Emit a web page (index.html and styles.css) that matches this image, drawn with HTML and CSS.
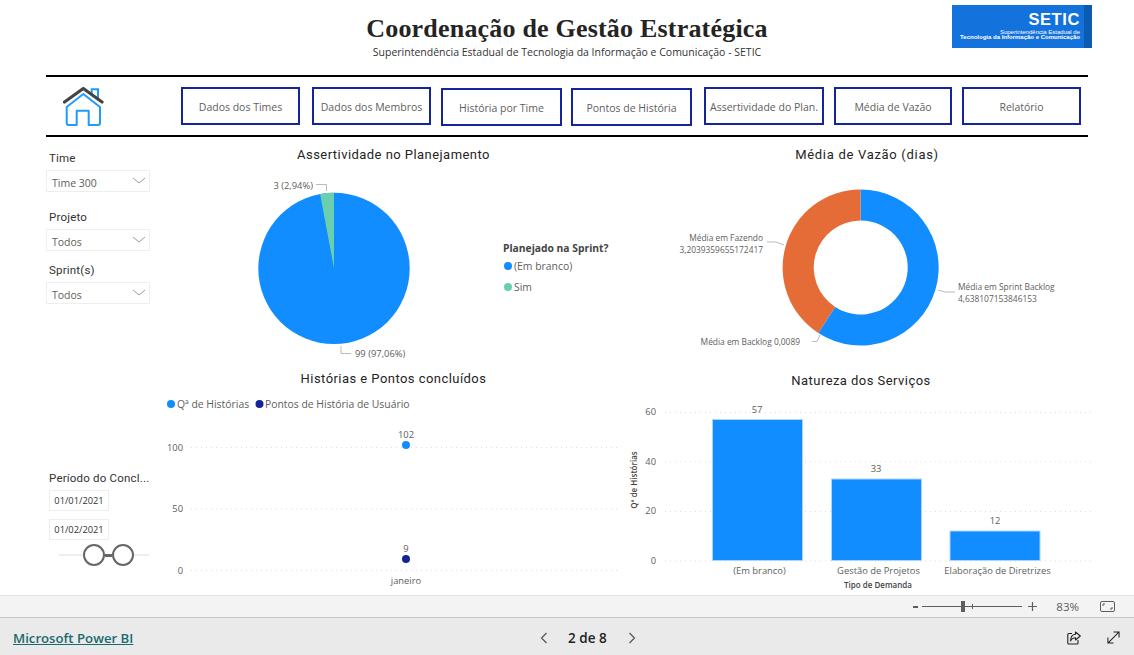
FILE: index.html
```html
<!DOCTYPE html>
<html lang="pt-BR">
<head>
    <meta charset="UTF-8">
    <title>Coordenação de Gestão Estratégica</title>
    <link rel="stylesheet" href="styles.css">
</head>
<body>
    <div class="report">
        <!-- cabeçalho -->
        <header class="report-header">
            <div></div>
            <div class="report-title">
                <h1>Coordenação de Gestão Estratégica</h1>
                <p>Superintendência Estadual de Tecnologia da Informação e Comunicação - SETIC</p>
            </div>
            <div class="logo">
                <div class="logo-main">
                    <strong>SETIC</strong>
                    <span>Superintendência Estadual de</span>
                    <span class="logo-bold">Tecnologia da Informação e Comunicação</span>
                </div>
                <div class="logo-bar"></div>
            </div>
        </header>

        <!-- menu -->
        <nav class="nav">
            <svg class="home-icon" width="42" height="40" viewBox="63 87 42 40" fill="none">
                <path d="M91.7 94V89.2H98V100" stroke="#1e9bff" stroke-width="2"/>
                <path d="M66.7 107L83.3 94L100 107V123Q100 125 98 125H88.7V110.7H76.7V125H68.7Q66.7 125 66.7 123Z" stroke="#1e9bff" stroke-width="2" stroke-linejoin="round"/>
                <path d="M64.5 102L83.3 88.5L102 102" stroke="#444" stroke-width="3.2" stroke-linecap="round" stroke-linejoin="round"/>
            </svg>
            <a class="nav-btn">Dados dos Times</a>
            <a class="nav-btn">Dados dos Membros</a>
            <a class="nav-btn nav-btn-low">História por Time</a>
            <a class="nav-btn nav-btn-low">Pontos de História</a>
            <a class="nav-btn">Assertividade do Plan.</a>
            <a class="nav-btn">Média de Vazão</a>
            <a class="nav-btn">Relatório</a>
        </nav>

        <div class="dash">
            <!-- filtros -->
            <aside class="filters">
                <div class="slicer slicer-time">
                    <label>Time</label>
                    <div class="dropdown">Time 300
                        <svg width="14" height="7" viewBox="0 0 14 7" fill="none"><path d="M1 1L7 6L13 1" stroke="#9a9a9a"/></svg>
                    </div>
                </div>
                <div class="slicer slicer-projeto">
                    <label>Projeto</label>
                    <div class="dropdown">Todos
                        <svg width="14" height="7" viewBox="0 0 14 7" fill="none"><path d="M1 1L7 6L13 1" stroke="#9a9a9a"/></svg>
                    </div>
                </div>
                <div class="slicer slicer-sprint">
                    <label>Sprint(s)</label>
                    <div class="dropdown">Todos
                        <svg width="14" height="7" viewBox="0 0 14 7" fill="none"><path d="M1 1L7 6L13 1" stroke="#9a9a9a"/></svg>
                    </div>
                </div>
                <div class="slicer slicer-periodo">
                    <label>Período do Concl...</label>
                    <div class="date-box">01/01/2021</div>
                    <div class="date-box">01/02/2021</div>
                    <div class="range">
                        <span class="range-track range-left"></span>
                        <span class="range-handle"></span>
                        <span class="range-link"></span>
                        <span class="range-handle"></span>
                        <span class="range-track range-right"></span>
                    </div>
                </div>
            </aside>

            <main class="charts">
                <!-- pizza -->
                <section class="visual visual-top">
                    <h2 class="title-offset">Assertividade no Planejamento</h2>
                    <svg width="467" height="201" viewBox="160 165 467 201">
                        <circle cx="334" cy="268.4" r="75.7" fill="#118dff"/>
                        <path d="M334 268.4V192.7A75.7 75.7 0 0 0 320.1 194Z" fill="#6acfae"/>
                        <path d="M316 184.5H326.5V191" class="leader"/>
                        <text x="313" y="188.5" text-anchor="end" class="lbl">3 (2,94%)</text>
                        <path d="M341 346V353.5H351" class="leader"/>
                        <text x="355" y="357" class="lbl">99 (97,06%)</text>
                        <text x="503" y="252" class="legend-title">Planejado na Sprint?</text>
                        <circle cx="508" cy="266" r="4" fill="#118dff"/>
                        <text x="514" y="270" class="lbl-lg">(Em branco)</text>
                        <circle cx="508" cy="287" r="4" fill="#6acfae"/>
                        <text x="514" y="291" class="lbl-lg">Sim</text>
                    </svg>
                </section>

                <!-- rosca -->
                <section class="visual visual-top visual-donut">
                    <h2>Média de Vazão (dias)</h2>
                    <svg width="480" height="201" viewBox="627 165 480 201">
                        <path d="M860.5 189.5A78 78 0 1 1 818.3 333L835.1 306.9A47 47 0 1 0 860.5 220.5Z" fill="#118dff"/>
                        <path d="M860.5 189.5A78 78 0 0 0 818.3 333L835.1 306.9A47 47 0 0 1 860.5 220.5Z" fill="#e66c37"/>
                        <path d="M767 242H776L784 245" class="leader"/>
                        <path d="M938 290L945 292H955" class="leader"/>
                        <path d="M812 341.5H817L820 335" class="leader"/>
                        <text x="763" y="241" text-anchor="end" class="lbl-sm">Média em Fazendo</text>
                        <text x="763" y="253" text-anchor="end" class="lbl-sm">3,2039359655172417</text>
                        <text x="958" y="290" class="lbl-sm">Média em Sprint Backlog</text>
                        <text x="958" y="302" class="lbl-sm">4,638107153846153</text>
                        <text x="800" y="345" text-anchor="end" class="lbl-sm">Média em Backlog 0,0089</text>
                    </svg>
                </section>

                <!-- pontos -->
                <section class="visual visual-low">
                    <h2 class="title-offset">Histórias e Pontos concluídos</h2>
                    <svg width="467" height="206" viewBox="160 389 467 206">
                        <circle cx="171" cy="404" r="4" fill="#118dff"/>
                        <text x="177" y="408" class="lbl-lg">Qª de Histórias</text>
                        <circle cx="259.5" cy="404" r="4" fill="#12239e"/>
                        <text x="265" y="408" class="lbl-lg">Pontos de História de Usuário</text>
                        <path d="M191 447.5H620M191 509H620M191 570.5H620" class="grid-line"/>
                        <text x="183" y="450.5" text-anchor="end" class="lbl">100</text>
                        <text x="183" y="512" text-anchor="end" class="lbl">50</text>
                        <text x="183" y="573.5" text-anchor="end" class="lbl">0</text>
                        <text x="406" y="438" text-anchor="middle" class="lbl">102</text>
                        <circle cx="406" cy="445" r="4" fill="#118dff"/>
                        <text x="406" y="552" text-anchor="middle" class="lbl">9</text>
                        <circle cx="406" cy="559" r="4" fill="#12239e"/>
                        <text x="406" y="584" text-anchor="middle" class="lbl">janeiro</text>
                    </svg>
                </section>

                <!-- colunas -->
                <section class="visual visual-low visual-bars">
                    <h2 class="title-bars">Natureza dos Serviços</h2>
                    <svg width="480" height="204" viewBox="627 391 480 204">
                        <path d="M665 412.5H1092M665 462H1092M665 511.5H1092M665 561H1092" class="grid-line"/>
                        <text x="656" y="415" text-anchor="end" class="lbl">60</text>
                        <text x="656" y="464.5" text-anchor="end" class="lbl">40</text>
                        <text x="656" y="514" text-anchor="end" class="lbl">20</text>
                        <text x="656" y="563.5" text-anchor="end" class="lbl">0</text>
                        <text transform="translate(637 480) rotate(-90)" text-anchor="middle" class="axis-title">Qª de Histórias</text>
                        <rect x="712.5" y="419.5" width="90" height="141" class="bar"/>
                        <rect x="831.5" y="479" width="90" height="81.5" class="bar"/>
                        <rect x="950" y="531" width="90" height="29.5" class="bar"/>
                        <text x="757" y="413" text-anchor="middle" class="lbl">57</text>
                        <text x="876" y="471.5" text-anchor="middle" class="lbl">33</text>
                        <text x="995" y="523.5" text-anchor="middle" class="lbl">12</text>
                        <text x="759.5" y="574" text-anchor="middle" class="lbl">(Em branco)</text>
                        <text x="878.5" y="574" text-anchor="middle" class="lbl">Gestão de Projetos</text>
                        <text x="997.5" y="574" text-anchor="middle" class="lbl">Elaboração de Diretrizes</text>
                        <text x="878" y="588" text-anchor="middle" class="axis-title">Tipo de Demanda</text>
                    </svg>
                </section>
            </main>
        </div>
    </div>

    <!-- barra de zoom -->
    <div class="zoom-bar">
        <span class="zoom-minus"></span>
        <div class="zoom-slider"><span class="zoom-thumb"></span><span class="zoom-tick"></span></div>
        <svg class="zoom-plus" width="9" height="9" viewBox="0 0 9 9"><path d="M0 4.5H9M4.5 0V9" stroke="#605e5c" stroke-width="1.2"/></svg>
        <span class="zoom-value">83%</span>
        <svg class="zoom-fit" width="15" height="11" viewBox="0 0 15 11" fill="none">
            <rect x="0.5" y="0.5" width="14" height="10" rx="1.5" stroke="#605e5c"/>
            <path d="M3 5V3H5M12 6V8H10" stroke="#605e5c"/>
        </svg>
    </div>

    <!-- rodapé -->
    <footer class="footer">
        <a class="pbi-link">Microsoft Power BI</a>
        <div class="pager">
            <svg width="8" height="12" viewBox="0 0 8 12" fill="none"><path d="M6.5 1L1.5 6L6.5 11" stroke="#555" stroke-width="1.2"/></svg>
            <span>2 de 8</span>
            <svg width="8" height="12" viewBox="0 0 8 12" fill="none"><path d="M1.5 1L6.5 6L1.5 11" stroke="#555" stroke-width="1.2"/></svg>
        </div>
        <div class="footer-icons">
            <svg width="14" height="14" viewBox="0 0 14 14" fill="none">
                <path d="M5 2.5H1.8Q0.8 2.5 0.8 3.5V12Q0.8 13 1.8 13H10Q11 13 11 12V9" stroke="#222" stroke-width="1.1"/>
                <path d="M8.5 1L13.3 5L8.5 9V6.8C6 6.8 4.6 7.8 3.6 10C3.6 6.5 5.4 3.6 8.5 3.3Z" stroke="#222" stroke-width="1.1" stroke-linejoin="round"/>
            </svg>
            <svg width="13" height="13" viewBox="0 0 14 14" fill="none">
                <path d="M1 13L13 1M7 1H13V7M1 7V13H7" stroke="#222" stroke-width="1.1"/>
            </svg>
        </div>
    </footer>
</body>
</html>
```

FILE: styles.css
```css
/* página */
html, body {
    height: 100%;
}

body {
    display: flex;
    flex-direction: column;
    margin: 0;
    background-color: #fff;
    color: #605e5c;
    font-family: "Open Sans", "Liberation Sans", sans-serif;
    overflow: hidden;
}

.report {
    flex: 1;
    min-height: 0;
    overflow: hidden;
}

/* cabeçalho */
.report-header {
    display: grid;
    grid-template-columns: 1fr auto 1fr;
    height: 75px;
    padding-right: 42px;
    box-sizing: border-box;
}

.report-title {
    text-align: center;
    padding-left: 42px;
}

.report-title h1 {
    margin: 14px 0 0;
    font-family: "Liberation Serif", serif;
    font-size: 26px;
    line-height: 30px;
    font-weight: bold;
    letter-spacing: 0.2px;
    color: #252423;
}

.report-title p {
    margin: 0;
    font-size: 10.5px;
    line-height: 16px;
    color: #333;
}

.logo {
    justify-self: end;
    display: flex;
    width: 140px;
    height: 43px;
    margin-top: 5px;
}

.logo-main {
    flex: 1;
    display: flex;
    flex-direction: column;
    align-items: flex-end;
    padding: 6px 4px 0 0;
    background-color: #1472dc;
    color: #fff;
    font-family: "Liberation Sans", sans-serif;
    font-size: 6px;
    line-height: 5px;
}

.logo-main strong {
    font-size: 16.5px;
    line-height: 16px;
    letter-spacing: 0.6px;
    margin-bottom: 3px;
}

.logo-bold {
    font-weight: bold;
    white-space: nowrap;
}

.logo-bar {
    width: 8px;
    background-color: #0b5cb0;
}

/* menu */
.nav {
    display: flex;
    align-items: flex-start;
    gap: 10px;
    width: 1042px;
    height: 62px;
    margin-left: 46px;
    box-sizing: border-box;
    border-top: 2.5px solid #000;
    border-bottom: 2.5px solid #000;
    padding-top: 9.5px;
}

.home-icon {
    margin: 0 66px 0 17px;
}

.nav-btn {
    display: flex;
    align-items: center;
    justify-content: center;
    width: 119px;
    height: 38px;
    box-sizing: border-box;
    padding-top: 2px;
    border: 2.5px solid #14259b;
    font-size: 10.5px;
    white-space: nowrap;
    color: #605e5c;
}

.nav-btn:nth-of-type(2) { margin-left: 2px; }
.nav-btn:nth-of-type(3) { margin-top: 1px; width: 121px; }
.nav-btn:nth-of-type(4) { margin-top: 1px; margin-left: -1px; width: 121px; }
.nav-btn:nth-of-type(5) { margin-left: 2px; width: 120px; }
.nav-btn:nth-of-type(6) { width: 118px; }

/* corpo do relatório */
.dash {
    display: flex;
    padding-top: 3px;
    padding-left: 46px;
}

/* filtros */
.filters {
    width: 114px;
    flex: none;
    padding-top: 10px;
}

.slicer label {
    display: block;
    margin-left: 3px;
    font-family: Roboto, sans-serif;
    font-size: 11.5px;
    line-height: 16px;
    letter-spacing: 0.2px;
    color: #333;
    white-space: nowrap;
}

.dropdown {
    display: flex;
    align-items: center;
    justify-content: space-between;
    width: 104px;
    height: 22px;
    margin-top: 4px;
    padding: 3px 3px 0 5px;
    box-sizing: border-box;
    border: 1px solid #eee;
    font-size: 10.5px;
}

.dropdown svg {
    margin-top: -4px;
}

.slicer-projeto { margin-top: 17px; }
.slicer-sprint { margin-top: 11px; }
.slicer-periodo { margin-top: 166px; }

.date-box {
    width: 60px;
    height: 21px;
    margin: 4px 0 8px 3px;
    box-sizing: border-box;
    border: 1px solid #eee;
    font-size: 9.3px;
    line-height: 19px;
    text-align: center;
    color: #333;
}

.date-box + .date-box {
    margin-top: 0;
    margin-bottom: 4px;
}

.range {
    display: flex;
    align-items: center;
    margin-left: 13px;
}

.range-track {
    height: 2px;
    background-color: #eee;
}

.range-left { width: 24px; }
.range-right { width: 15px; }

.range-handle {
    width: 22px;
    height: 22px;
    box-sizing: border-box;
    border: 2px solid #666;
    border-radius: 50%;
    background-color: #fff;
}

.range-link {
    width: 7px;
    height: 3px;
    background-color: #666;
}

/* visuais */
.charts {
    display: grid;
    grid-template-columns: 467px 480px;
    grid-template-rows: 226px 229px;
}

.visual {
    min-width: 0;
}

.visual svg {
    display: block;
}

.visual h2 {
    margin: 0;
    font-family: Roboto, sans-serif;
    font-size: 13px;
    line-height: 20px;
    font-weight: 400;
    letter-spacing: 0.45px;
    text-align: center;
    color: #252423;
}

.visual-top h2 { margin-top: 5px; }
.visual-low h2 { margin-top: 3px; }
.visual-donut h2 { letter-spacing: 0.7px; }
.visual-bars h2 { margin-top: 5px; padding-right: 12px; }

.lbl {
    font-size: 9.4px;
    fill: #605e5c;
}

.lbl-sm {
    font-size: 8.4px;
    fill: #605e5c;
}

.lbl-lg {
    font-size: 10.4px;
    fill: #605e5c;
}

.legend-title {
    font-size: 10.3px;
    font-weight: 700;
    fill: #444;
}

.axis-title {
    font-size: 8px;
    font-weight: 600;
    fill: #444;
}

.leader {
    fill: none;
    stroke: #bbb;
    stroke-width: 1;
}

.grid-line {
    fill: none;
    stroke: #ddd;
    stroke-width: 1;
    stroke-dasharray: 1 4;
}

.bar {
    fill: #118dff;
    stroke: #a9d5ff;
    stroke-width: 1;
}

/* barra de zoom */
.zoom-bar {
    display: flex;
    align-items: center;
    flex: none;
    height: 23px;
    box-sizing: border-box;
    padding-right: 19px;
    justify-content: flex-end;
    background-color: #f3f3f3;
    border-top: 1px solid #e5e5e5;
    border-bottom: 1px solid #c8c8c8;
}

.zoom-minus {
    width: 5px;
    height: 2px;
    margin-right: 4px;
    background-color: #605e5c;
}

.zoom-slider {
    position: relative;
    width: 100px;
    height: 1px;
    background-color: #605e5c;
}

.zoom-thumb {
    position: absolute;
    top: -5px;
    left: 39px;
    width: 4px;
    height: 11px;
    background-color: #605e5c;
}

.zoom-tick {
    position: absolute;
    top: -2px;
    left: 50px;
    width: 1px;
    height: 5px;
    background-color: #605e5c;
}

.zoom-plus {
    margin-left: 6px;
}

.zoom-value {
    margin-left: 19px;
    font-size: 11.5px;
}

.zoom-fit {
    margin-left: 21px;
}

/* rodapé */
.footer {
    display: flex;
    align-items: center;
    flex: none;
    height: 37px;
    box-sizing: border-box;
    padding: 3px 14px 0 13px;
    background-color: #eaeaea;
}

.pbi-link {
    width: 120px;
    font-size: 13.2px;
    font-weight: 600;
    white-space: nowrap;
    text-decoration: underline;
    color: #1b6a6f;
}

.pager {
    display: flex;
    align-items: center;
    margin-left: 407px;
    font-size: 13.5px;
    font-weight: 600;
    color: #222;
}

.pager span {
    margin: 0 21px 0 20px;
}

.footer-icons {
    display: flex;
    gap: 26px;
    margin-left: auto;
}
```
